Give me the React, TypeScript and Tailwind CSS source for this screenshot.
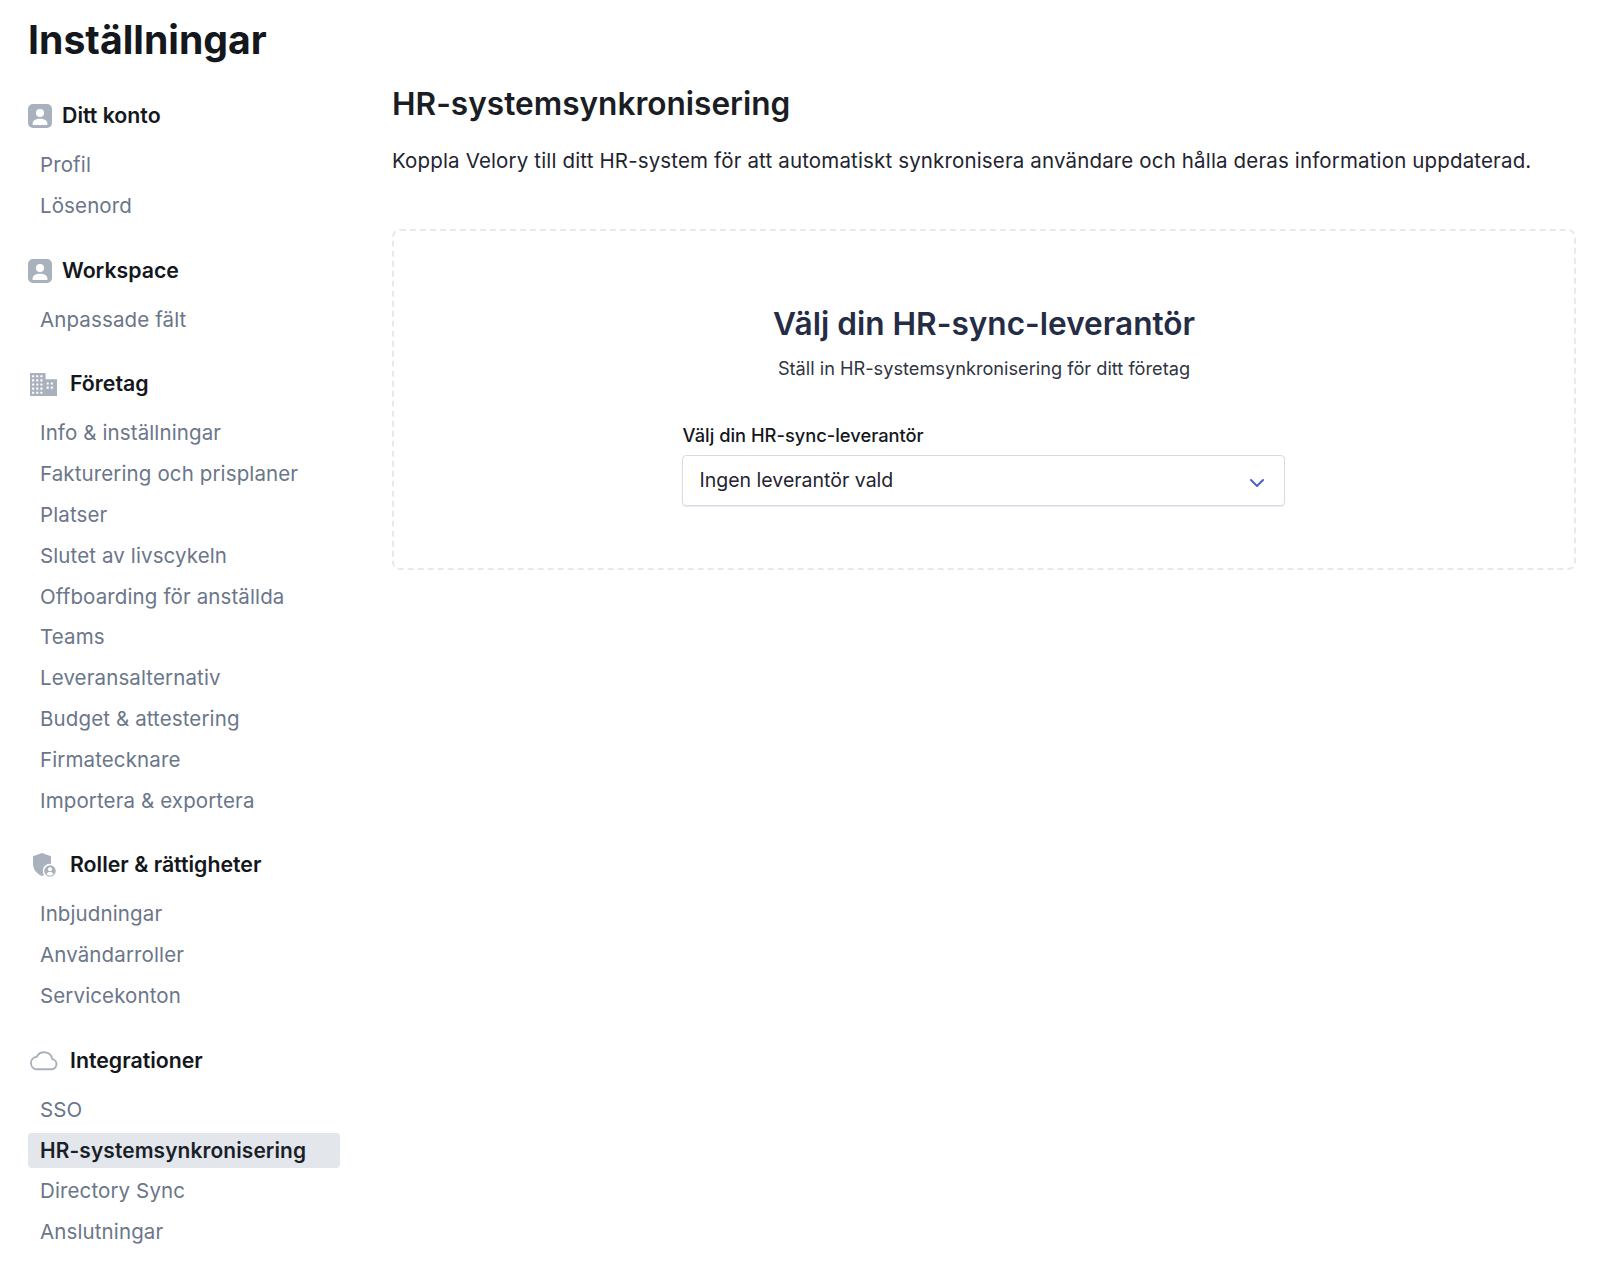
import React from 'react';

const grayIcon = 'text-[#a9b1bd]';

const AccountIcon = () => (
  <svg viewBox="0 0 24 24" className={`h-6 w-6 ${grayIcon}`}>
    <rect width="24" height="24" rx="5" fill="currentColor" />
    <circle cx="12" cy="9" r="4" fill="#fff" />
    <path d="M4.5 20c0-3.4 3.4-5.2 7.5-5.2s7.5 1.8 7.5 5.2c0 .6-.4 1-1 1h-13c-.6 0-1-.4-1-1z" fill="#fff" />
  </svg>
);

const BuildingIcon = () => (
  <svg viewBox="0 0 26 22" className={`h-[23px] w-[27px] ${grayIcon}`}>
    <path fillRule="evenodd" fill="currentColor" d="M0 0h15v6h11v16H0zM2 2v2h2V2zm4 0v2h2V2zm4 0v2h2V2zM2 6v2h2V6zm4 0v2h2V6zm4 0v2h2V6zM2 10v2h2v-2zm4 0v2h2v-2zm4 0v2h2v-2zM2 14v2h2v-2zm4 0v2h2v-2zm4 0v2h2v-2zM2 18v2h2v-2zm4 0v2h2v-2zm4 0v2h2v-2zm6-9v2h2V9zm4 0v2h2V9zm-4 4v2h2v-2zm4 0v2h2v-2z" />
  </svg>
);

const ShieldIcon = () => (
  <svg viewBox="0 0 26 26" className={`h-[26px] w-[26px] ${grayIcon}`}>
    <path fill="currentColor" d="M11 1l9 3.2v7c0 6.500-4 10.800-9 12.800-5-2-9-6.300-9-12.800v-7z" />
    <circle cx="19" cy="19" r="6.500" fill="currentColor" stroke="#fff" strokeWidth="1.500" />
    <circle cx="19" cy="17.300" r="2" fill="#fff" />
    <path d="M15.500 22.300c.5-1.700 2-2.300 3.500-2.300s3 .6 3.500 2.300a5 5 0 0 1-7 0z" fill="#fff" />
  </svg>
);

const CloudIcon = () => (
  <svg viewBox="0 0 28 20" fill="none" className={`h-[21px] w-[29px] ${grayIcon}`}>
    <path stroke="currentColor" strokeWidth="1.800" strokeLinejoin="round" d="M7 18.500h14.500a5 5 0 0 0 1-9.900 8 8 0 0 0-15-2.200A6.100 6.100 0 0 0 7 18.500z" />
  </svg>
);

const sections = [
  { title: 'Ditt konto', icon: <AccountIcon />, head: 'gap-[10px]', items: ['Profil', 'Lösenord'] },
  { title: 'Workspace', icon: <AccountIcon />, head: 'gap-[10px]', items: ['Anpassade fält'] },
  {
    title: 'Företag',
    icon: <BuildingIcon />,
    head: 'gap-[13px] pl-[2px]',
    items: [
      'Info & inställningar',
      'Fakturering och prisplaner',
      'Platser',
      'Slutet av livscykeln',
      'Offboarding för anställda',
      'Teams',
      'Leveransalternativ',
      'Budget & attestering',
      'Firmatecknare',
      'Importera & exportera',
    ],
  },
  { title: 'Roller & rättigheter', icon: <ShieldIcon />, head: 'gap-[13px] pl-[3px]', items: ['Inbjudningar', 'Användarroller', 'Servicekonton'] },
  { title: 'Integrationer', icon: <CloudIcon />, head: 'gap-[12px] pl-[1px]', items: ['SSO', 'HR-systemsynkronisering', 'Directory Sync', 'Anslutningar'] },
];

const App: React.FC = () => {
  return (
    <div className="h-[1275px] overflow-hidden bg-white pl-[28px] font-['Inter',sans-serif] text-[#14171c]">
      <h1 className="pt-[13px] text-[39.2px] leading-[54px] font-bold">Inställningar</h1>

      <div className="flex">
        {/* Sidebar */}
        <aside className="w-[364px] shrink-0 pt-[32px]">
          <div className="w-[312px] space-y-[27px]">
            {sections.map((section) => (
              <section key={section.title}>
                <div className="mb-3 flex h-[34px] items-center">
                  <span className={`flex items-center ${section.head}`}>
                    {section.icon}
                    <span className="text-[21.3px] font-semibold">{section.title}</span>
                  </span>
                </div>
                <ul>
                  {section.items.map((item) => (
                    <li key={item} className="flex h-[40.8px] items-center">
                      <span
                        className={`flex h-[35px] w-full items-center rounded px-3 tracking-[0.12px] ${
                          item === 'HR-systemsynkronisering'
                            ? 'bg-[#e3e7ec] text-[20.9px] font-semibold text-[#1a1f29]'
                            : 'text-[20.5px] text-[#6b7689]'
                        }`}
                      >
                        {item}
                      </span>
                    </li>
                  ))}
                </ul>
              </section>
            ))}
          </div>
        </aside>

        {/* Main */}
        <main className="w-[1184px]">
          <h2 className="pt-[17px] text-[31.6px] leading-[40px] font-semibold text-[#1a1d24]">HR-systemsynkronisering</h2>
          <p className="mt-[20px] text-[20.5px] leading-[34px] tracking-[0.15px] text-[#1f2430]">
            Koppla Velory till ditt HR-system för att automatiskt synkronisera användare och hålla deras information uppdaterad.
          </p>

          <div className="mt-[51px] flex h-[341px] flex-col items-center rounded-lg border-2 border-dashed border-[#e6e9ee] pt-[72px]">
            <h3 className="text-[31.6px] leading-[42px] font-semibold text-[#252c45]">Välj din HR-sync-leverantör</h3>
            <p className="mt-[9px] text-[18.2px] leading-[28px] text-[#2f3542]">Ställ in HR-systemsynkronisering för ditt företag</p>

            <div className="mt-[40px] mr-[2px] w-[603px]">
              <label className="block pl-px text-[18.3px] leading-[26px] font-medium text-[#14171c]">Välj din HR-sync-leverantör</label>
              <div className="mt-[7px] flex h-[51px] items-center justify-between rounded border border-[#d6dbe6] pr-[19px] pl-[17px] text-[19.5px] text-[#1f2430] shadow-[0_1px_1px_rgba(60,70,110,0.12)]">
                <span className="pt-px">Ingen leverantör vald</span>
                <svg viewBox="0 0 16 10" fill="none" className="mt-1 h-[10px] w-4">
                  <path d="M2 2l6 6 6-6" stroke="#4a63c7" strokeWidth="2" strokeLinecap="round" strokeLinejoin="round" />
                </svg>
              </div>
            </div>
          </div>
        </main>
      </div>
    </div>
  );
};

export default App;
